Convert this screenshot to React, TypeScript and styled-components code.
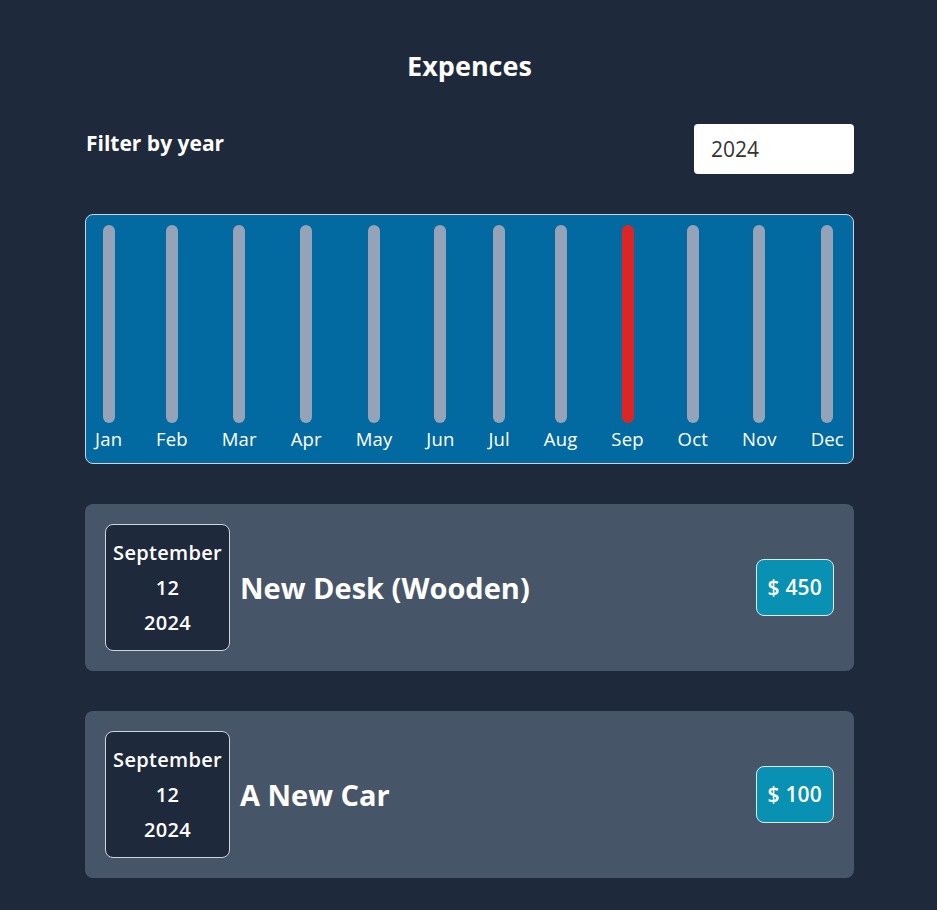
import React from "react";
import styled, { createGlobalStyle } from "styled-components";

const Global = createGlobalStyle`
  html, body { margin: 0; padding: 0; background: #1e293b; }
  body { font-family: "Open Sans", "Noto Sans", sans-serif; color: #fff; }
`;

const Page = styled.div`
  width: 769px;
  margin: 0 0 0 85px;
  padding: 50px 0 32px;
  display: flex;
  flex-direction: column;
`;

const Title = styled.h1`
  margin: 0;
  font-size: 27px;
  line-height: 32px;
  font-weight: 700;
  text-align: center;
`;

const FilterRow = styled.div`
  margin-top: 42px;
  display: flex;
  justify-content: space-between;
  align-items: flex-start;
`;

const FilterLabel = styled.label`
  margin-top: 5px;
  padding-left: 1px;
  font-size: 21px;
  line-height: 28px;
  font-weight: 700;
`;

const YearInput = styled.div`
  width: 160px;
  height: 50px;
  box-sizing: border-box;
  background: #fff;
  border-radius: 4px;
  padding: 0 17px;
  display: flex;
  align-items: center;
  color: #333;
  font-size: 21px;
`;

const Chart = styled.div`
  margin-top: 40px;
  height: 250px;
  box-sizing: border-box;
  background: #0369a1;
  border: 1px solid #cbd5e1;
  border-radius: 8px;
  padding: 10px 9px 11px;
  display: flex;
  justify-content: space-between;
`;

const Column = styled.div`
  display: flex;
  flex-direction: column;
  align-items: center;
  gap: 4px;
`;

const Bar = styled.div<{ $active?: boolean }>`
  width: 12px;
  height: 198px;
  border-radius: 6px;
  background: ${(p) => (p.$active ? "#dc2626" : "#94a3b8")};
`;

const MonthLabel = styled.span`
  font-size: 18.5px;
  line-height: 24px;
  letter-spacing: 0.2px;
`;

const List = styled.div`
  margin-top: 40px;
  display: flex;
  flex-direction: column;
  gap: 40px;
`;

const Card = styled.div`
  background: #475569;
  border-radius: 8px;
  padding: 20px;
  display: flex;
  align-items: center;
  gap: 10px;
`;

const DateBox = styled.div`
  width: 125px;
  box-sizing: border-box;
  background: #1e293b;
  border: 1px solid #cbd5e1;
  border-radius: 8px;
  padding: 10px 0;
  display: flex;
  flex-direction: column;
  align-items: center;
  font-size: 20px;
  line-height: 35px;
  font-weight: 600;
  letter-spacing: 0.3px;
`;

const ItemTitle = styled.h2`
  margin: 0;
  flex: 1;
  font-size: 29px;
  font-weight: 700;
`;

const Price = styled.div`
  background: #0891b2;
  border: 1px solid #e2e8f0;
  border-radius: 8px;
  padding: 14px 11px;
  font-size: 21px;
  line-height: 27px;
  font-weight: 600;
  letter-spacing: 0.2px;
`;

const months = ["Jan", "Feb", "Mar", "Apr", "May", "Jun", "Jul", "Aug", "Sep", "Oct", "Nov", "Dec"];

const expenses = [
  { title: "New Desk (Wooden)", amount: 450 },
  { title: "A New Car", amount: 100 },
];

export default function App() {
  return (
    <>
      <Global />
      <Page>
        <Title>Expences</Title>
        <FilterRow>
          <FilterLabel>Filter by year</FilterLabel>
          <YearInput>2024</YearInput>
        </FilterRow>
        <Chart>
          {months.map((m) => (
            <Column key={m}>
              <Bar $active={m === "Sep"} />
              <MonthLabel>{m}</MonthLabel>
            </Column>
          ))}
        </Chart>
        <List>
          {expenses.map((e) => (
            <Card key={e.title}>
              <DateBox>
                <span>September</span>
                <span>12</span>
                <span>2024</span>
              </DateBox>
              <ItemTitle>{e.title}</ItemTitle>
              <Price>$ {e.amount}</Price>
            </Card>
          ))}
        </List>
      </Page>
    </>
  );
}
